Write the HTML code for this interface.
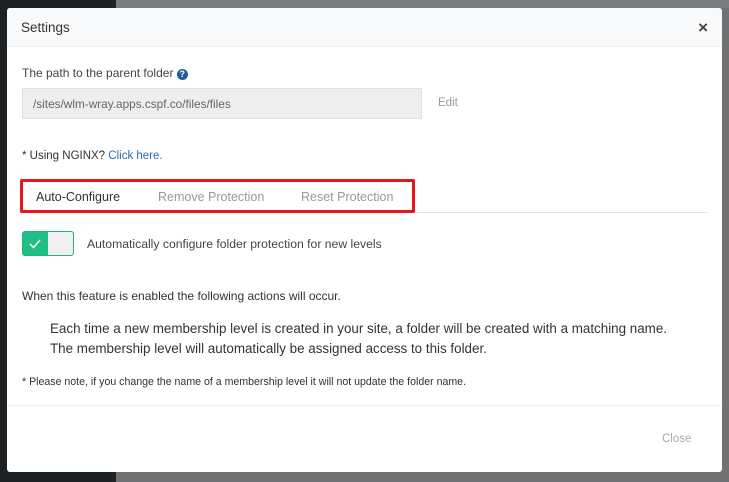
<!DOCTYPE html>
<html><head><style>
body{margin:0;width:729px;height:482px;overflow:hidden;background:#6f7173;font-family:"Liberation Sans",sans-serif;position:relative}
.side{position:absolute;left:0;top:0;width:116px;height:482px;background:#1f2224}
.top{position:absolute;left:116px;top:0;width:613px;height:8px;background:#7a7c7e}
.modal{position:absolute;left:7px;top:8px;width:715px;height:464px;background:#fff;border-radius:3px;overflow:hidden}
.hdr{height:38px;background:#f8f9fa;border-bottom:1px solid #eceef0;position:relative}
.hdr span{position:absolute;left:14px;top:12px;font-size:13.5px;color:#333}
.x{position:absolute;right:14px;top:10px;font-size:17px;font-weight:bold;color:#444}
.t{position:absolute;color:#333}
</style></head><body>
<div class="side"></div><div class="top"></div>
<div class="modal">
<div class="hdr"><span>Settings</span><div class="x">×</div></div>
<div class="t" style="left:15px;top:58px;font-size:12px;color:#444">The path to the parent folder <span style="display:inline-block;width:11px;height:11px;border-radius:50%;background:#1f5d9c;color:#fff;font-size:9px;text-align:center;line-height:11px;font-weight:bold;vertical-align:0">?</span></div>
<div style="position:absolute;left:15px;top:80px;width:400px;height:31px;background:#eeeeee;border:1px solid #e0e0e0;box-sizing:border-box"></div>
<div class="t" style="left:26px;top:89px;font-size:11.8px;color:#666">/sites/wlm-wray.apps.cspf.co/files/files</div>
<div class="t" style="left:431px;top:89px;font-size:11.5px;color:#999">Edit</div>
<div class="t" style="left:15px;top:142px;font-size:11.5px;color:#333">* Using NGINX? <span style="color:#2e6da4">Click here.</span></div>
<div style="position:absolute;left:13px;top:204px;width:687px;height:1px;background:#e5e5e5"></div>
<div style="position:absolute;left:13px;top:171px;width:395px;height:34px;border:3px solid #e8141b;border-radius:2px;box-sizing:border-box"></div>
<div class="t" style="left:29px;top:182px;font-size:12.5px;color:#333">Auto-Configure</div>
<div class="t" style="left:151px;top:182px;font-size:12.5px;color:#999">Remove Protection</div>
<div class="t" style="left:294px;top:182px;font-size:12.5px;color:#999">Reset Protection</div>
<div style="position:absolute;left:15px;top:223px;width:52px;height:25px;border:1px solid #1fb37e;border-radius:3px;box-sizing:border-box;background:#1fbf86;overflow:hidden">
<div style="position:absolute;right:0;top:0;width:25px;height:23px;background:#f0f0f0"></div>
<svg style="position:absolute;left:6px;top:6px" width="12" height="11"><path d="M1 6l3.5 3.5L11 2" stroke="#fff" stroke-width="1.5" fill="none"/></svg></div>
<div class="t" style="left:80px;top:229px;font-size:12.2px;color:#444">Automatically configure folder protection for new levels</div>
<div class="t" style="left:15px;top:281px;font-size:12px;color:#333">When this feature is enabled the following actions will occur.</div>
<div class="t" style="left:43px;top:311px;font-size:13.4px;color:#333;line-height:20px">Each time a new membership level is created in your site, a folder will be created with a matching name.<br>The membership level will automatically be assigned access to this folder.</div>
<div class="t" style="left:15px;top:368px;font-size:10.6px;color:#333">* Please note, if you change the name of a membership level it will not update the folder name.</div>
<div style="position:absolute;left:0;top:397px;width:715px;height:1px;background:#f0f0f0"></div>
<div class="t" style="left:655px;top:425px;font-size:11.5px;color:#aaa">Close</div>
</div>
</body></html>
